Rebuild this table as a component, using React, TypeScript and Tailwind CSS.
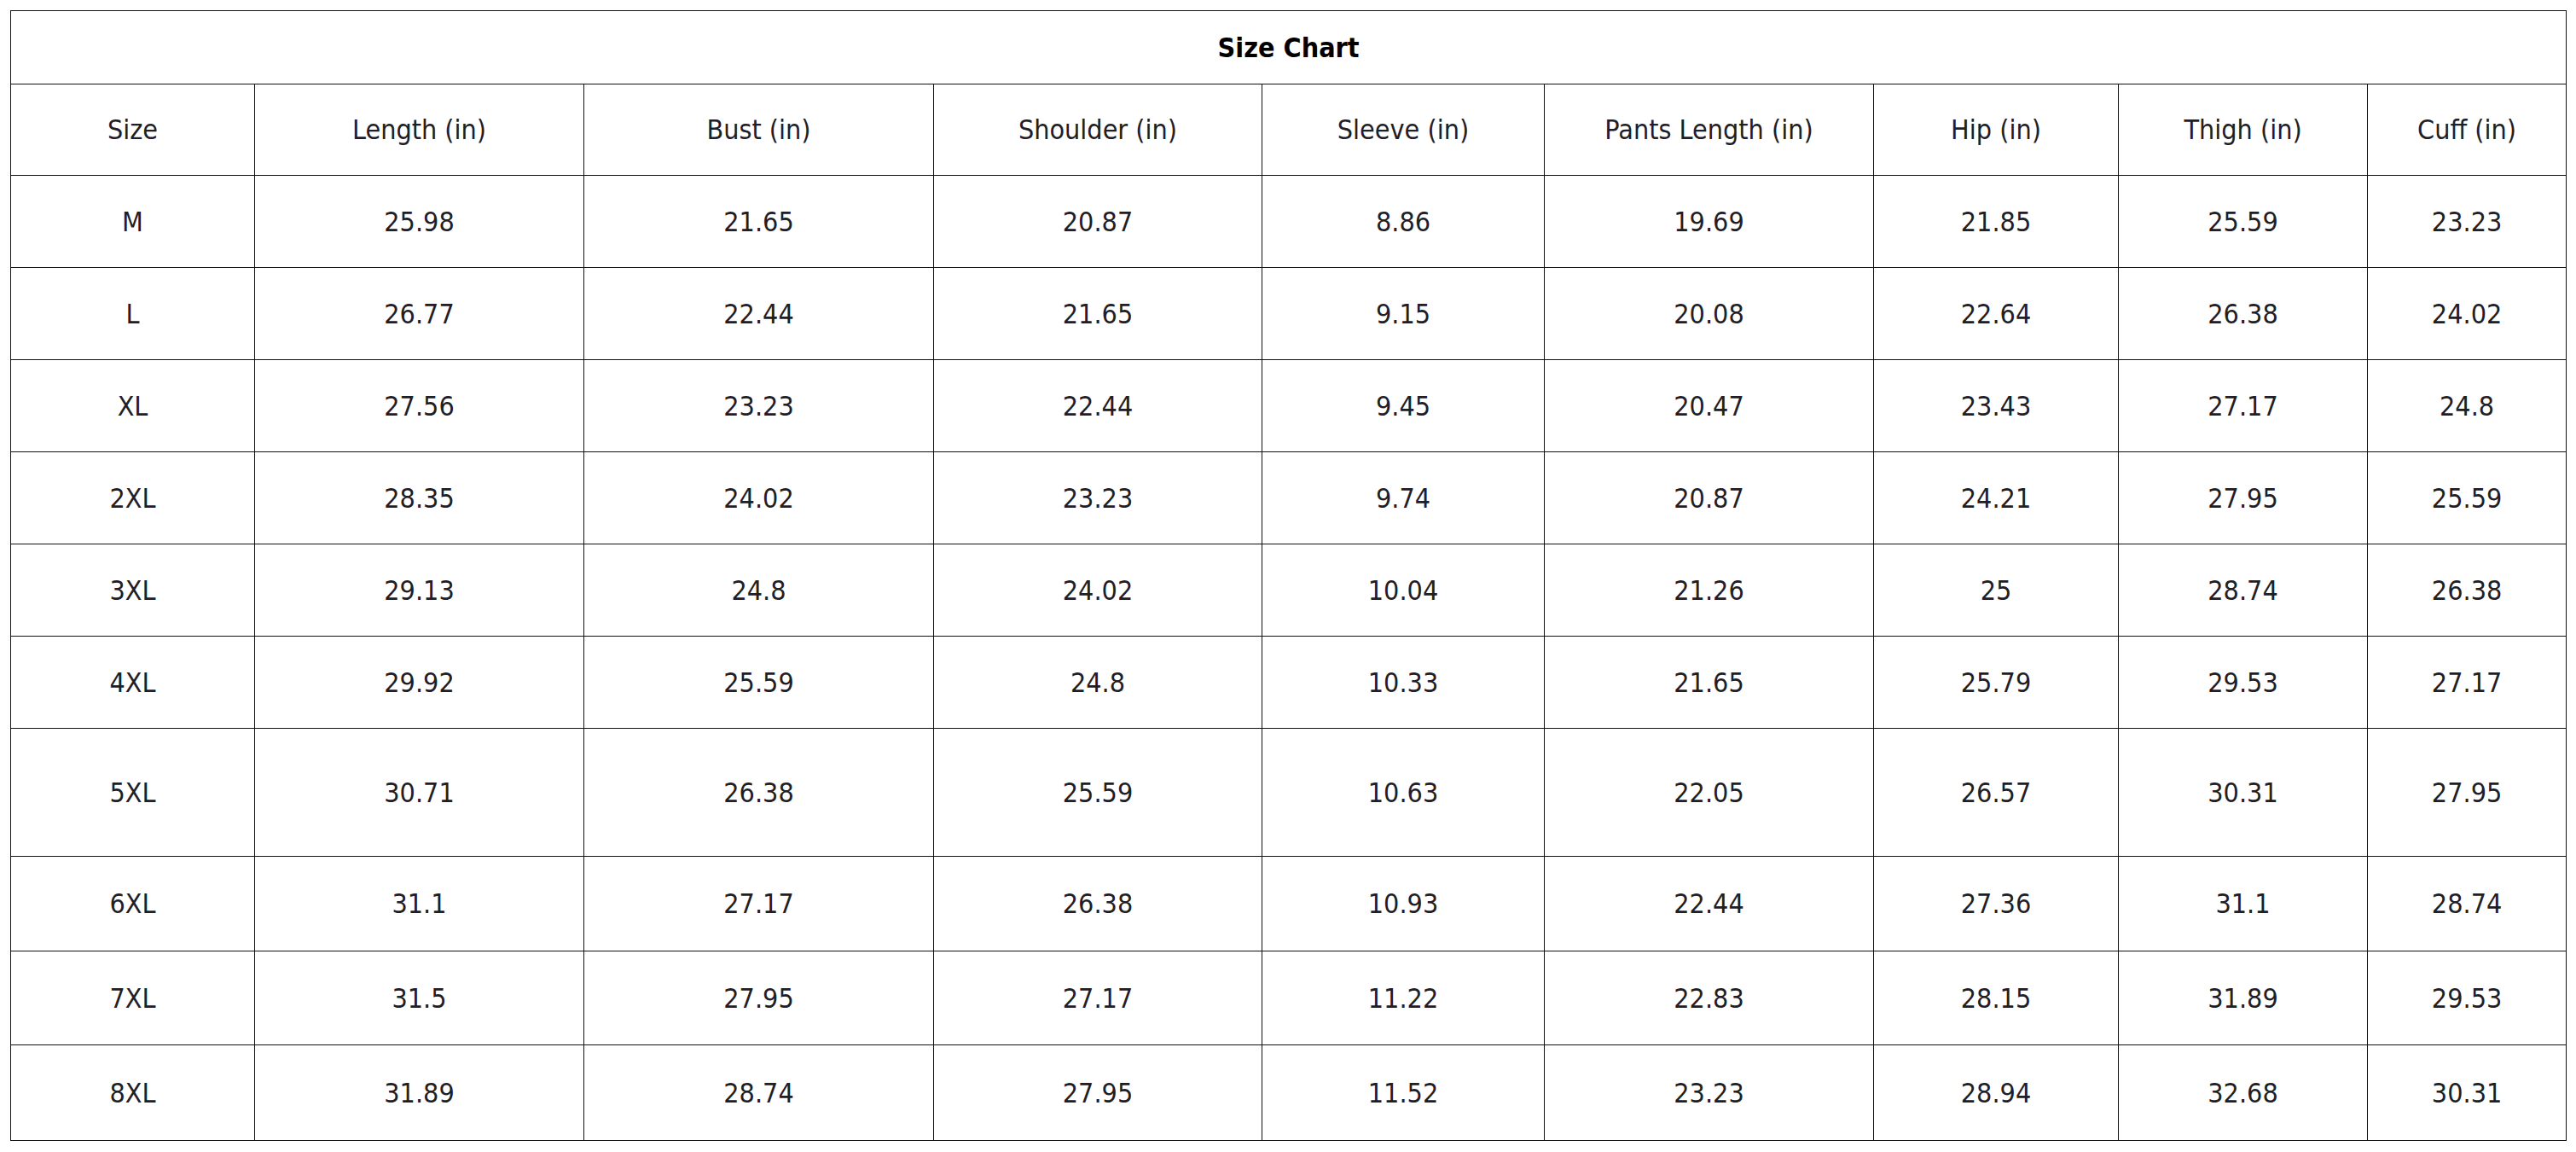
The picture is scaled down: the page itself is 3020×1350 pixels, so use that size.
const columns = [
  { label: "Size", width: "w-[286px]" },
  { label: "Length (in)", width: "w-[386px]" },
  { label: "Bust (in)", width: "w-[410px]" },
  { label: "Shoulder (in)", width: "w-[385px]" },
  { label: "Sleeve (in)", width: "w-[331px]" },
  { label: "Pants Length (in)", width: "w-[386px]" },
  { label: "Hip (in)", width: "w-[287px]" },
  { label: "Thigh (in)", width: "w-[292px]" },
  { label: "Cuff (in)", width: "w-[233px]" },
]

const rows: { cells: string[]; height: string }[] = [
  { cells: ["M", "25.98", "21.65", "20.87", "8.86", "19.69", "21.85", "25.59", "23.23"], height: "h-[108px]" },
  { cells: ["L", "26.77", "22.44", "21.65", "9.15", "20.08", "22.64", "26.38", "24.02"], height: "h-[108px]" },
  { cells: ["XL", "27.56", "23.23", "22.44", "9.45", "20.47", "23.43", "27.17", "24.8"], height: "h-[108px]" },
  { cells: ["2XL", "28.35", "24.02", "23.23", "9.74", "20.87", "24.21", "27.95", "25.59"], height: "h-[108px]" },
  { cells: ["3XL", "29.13", "24.8", "24.02", "10.04", "21.26", "25", "28.74", "26.38"], height: "h-[108px]" },
  { cells: ["4XL", "29.92", "25.59", "24.8", "10.33", "21.65", "25.79", "29.53", "27.17"], height: "h-[108px]" },
  { cells: ["5XL", "30.71", "26.38", "25.59", "10.63", "22.05", "26.57", "30.31", "27.95"], height: "h-[150px]" },
  { cells: ["6XL", "31.1", "27.17", "26.38", "10.93", "22.44", "27.36", "31.1", "28.74"], height: "h-[111px]" },
  { cells: ["7XL", "31.5", "27.95", "27.17", "11.22", "22.83", "28.15", "31.89", "29.53"], height: "h-[110px]" },
  { cells: ["8XL", "31.89", "28.74", "27.95", "11.52", "23.23", "28.94", "32.68", "30.31"], height: "h-[112px]" },
]

export default function App() {
  return (
    <div className="min-h-screen bg-white p-[12px] font-['DejaVu_Sans_Condensed','DejaVu_Sans',sans-serif] text-[#1f2026]">
      <table className="w-full table-fixed border-collapse border border-[#111]">
        <colgroup>
          {columns.map((col) => (
            <col key={col.label} className={col.width} />
          ))}
        </colgroup>
        <thead>
          <tr className="h-[86px]">
            <th
              colSpan={columns.length}
              className="border border-[#111] text-center text-[32px] font-bold text-black"
            >
              Size Chart
            </th>
          </tr>
          <tr className="h-[107px]">
            {columns.map((col) => (
              <th
                key={col.label}
                className="border border-[#111] text-center text-[32px] font-normal"
              >
                {col.label}
              </th>
            ))}
          </tr>
        </thead>
        <tbody>
          {rows.map((row) => (
            <tr key={row.cells[0]} className={row.height}>
              {row.cells.map((cell, i) => (
                <td
                  key={i}
                  className="border border-[#111] text-center text-[32px]"
                >
                  {cell}
                </td>
              ))}
            </tr>
          ))}
        </tbody>
      </table>
    </div>
  )
}
